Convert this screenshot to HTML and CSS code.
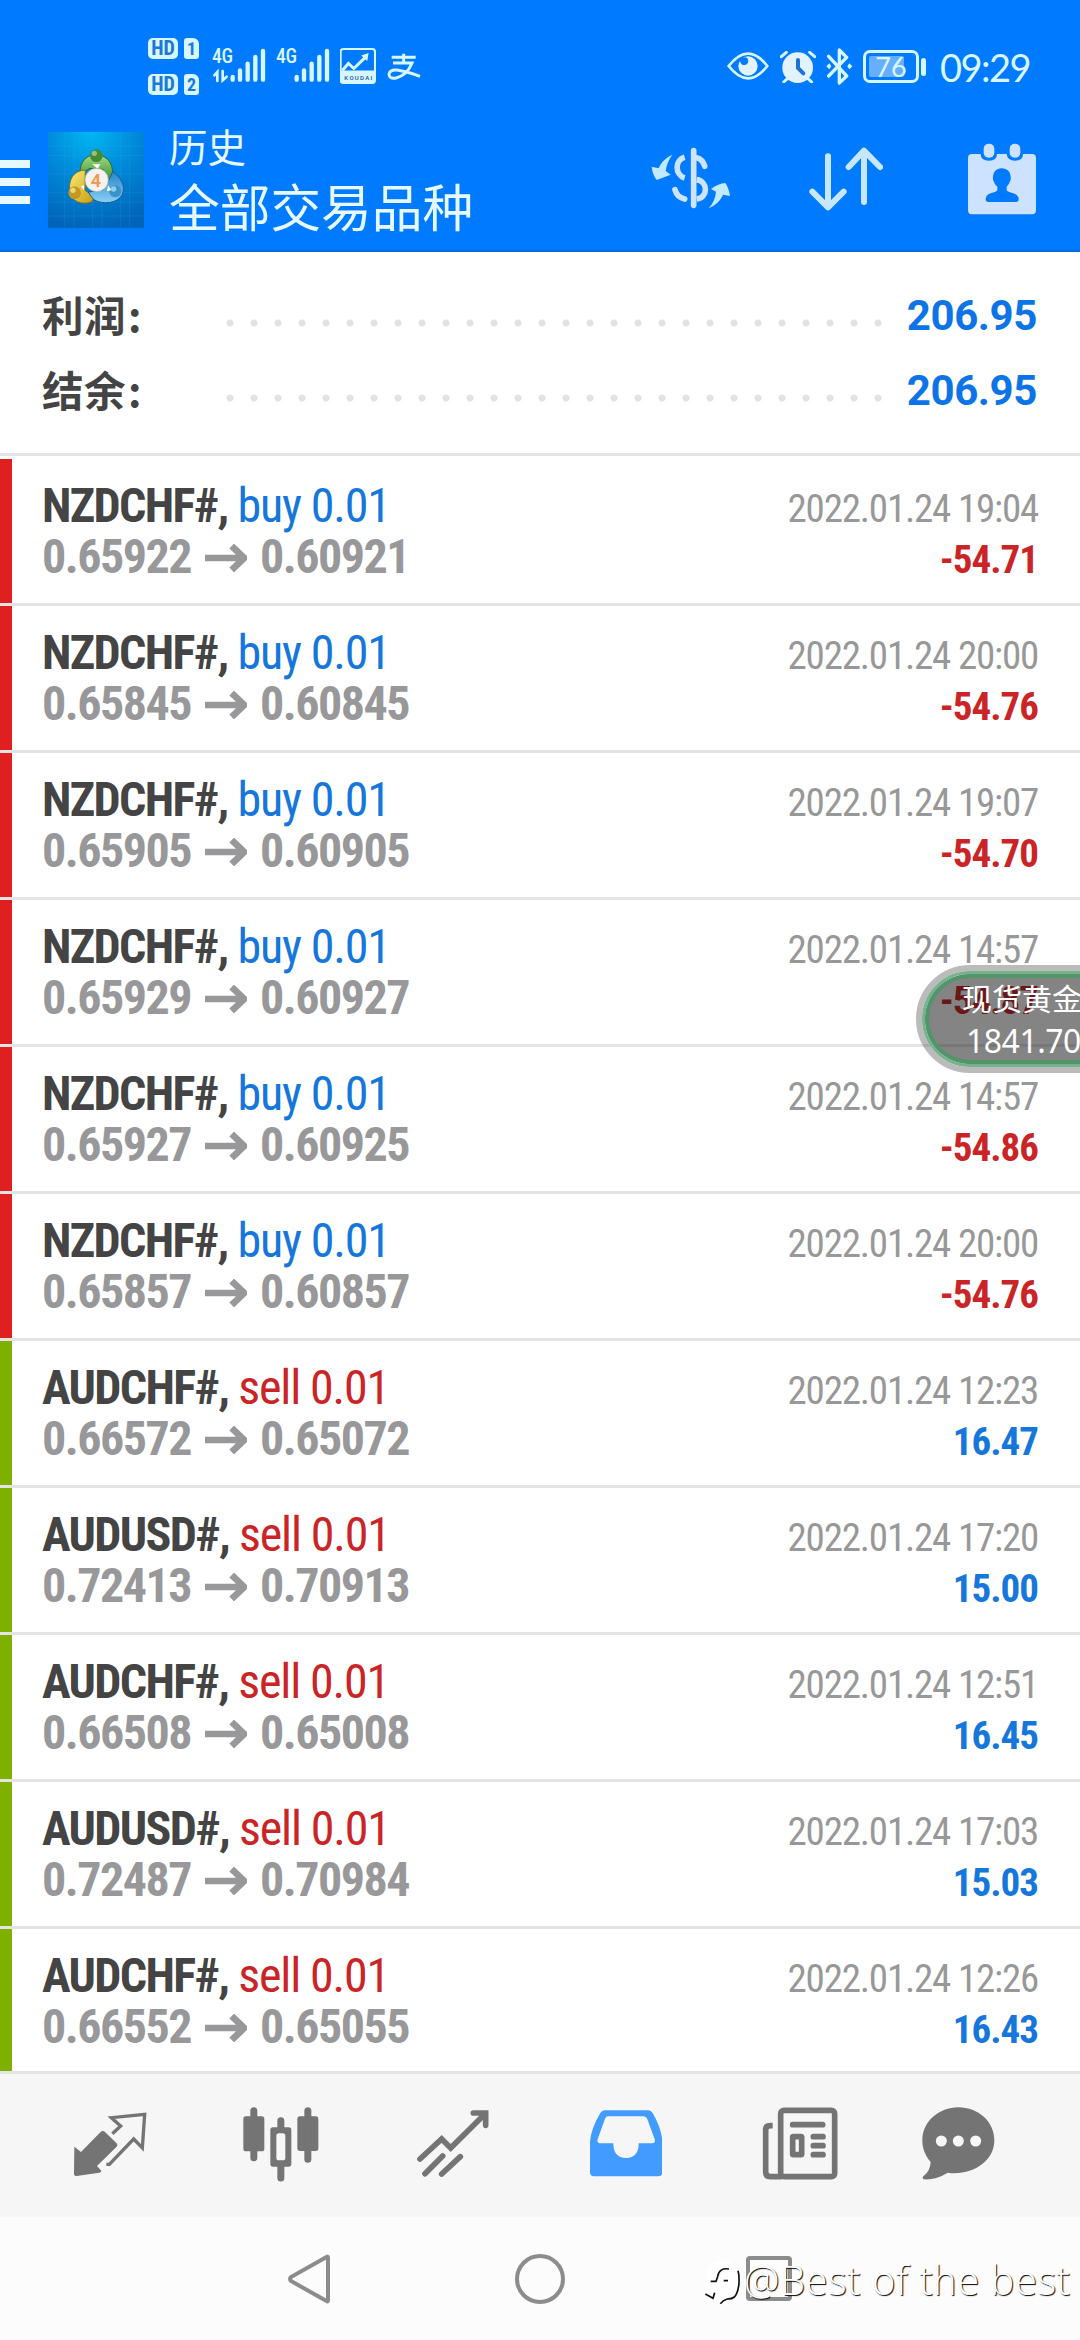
FILE: index.html
```html
<!DOCTYPE html>
<html lang="zh-CN">
<head>
<meta charset="utf-8">
<title>历史</title>
<link rel="stylesheet" href="styles.css">
</head>
<body>
<svg class="defs" width="0" height="0">
  <symbol id="arrow" viewBox="615 296 126 84"><path d="M615 338H732M695 302L733 338L695 374" fill="none" stroke="currentColor" stroke-width="20"/></symbol>
</svg>
<div class="screen">
  <header class="top">
    <div class="status">
      <div class="hd">
        <div class="hd-line"><span class="hd-tag">HD</span><span class="sim">1</span></div>
        <div class="hd-line"><span class="hd-tag">HD</span><span class="sim">2</span></div>
      </div>
      <svg class="sig1" width="54" height="34" viewBox="242 85 162 102" fill="none" stroke="#d6f7ff" stroke-linecap="round"><path d="M304 172V180M326 152V180M349 132V180M372 112V180M395 94V180" stroke-width="13"/><path d="M249 167L258 157V184M274 154V182L286 171" stroke-width="8"/><text x="242" y="131" class="g4">4G</text></svg>
      <svg class="sig2" width="54" height="34" viewBox="437 85 162 102" fill="none" stroke="#d6f7ff" stroke-linecap="round"><path d="M499 172V180M521 152V180M544 132V180M567 112V180M590 94V180" stroke-width="13"/><text x="437" y="131" class="g4">4G</text></svg>
      <svg class="koudai" width="36" height="36" viewBox="629 86 107 107"><rect x="631" y="89" width="102" height="101" rx="8" fill="none" stroke="#d6f7ff" stroke-width="6"/><path d="M630 153H734V184Q734 191 727 191H638Q630 191 630 184Z" fill="#d6f7ff"/><path d="M636 153L654 132L670 147L705 113" fill="none" stroke="#d6f7ff" stroke-width="9"/><path d="M692 108L714 101L710 125Z" fill="#d6f7ff"/><text x="642" y="180" class="kd" textLength="83">KOUDAI</text></svg>
      <svg class="ali" width="34" height="28" viewBox="770 99 102 84" fill="none" stroke="#d6f7ff" stroke-width="9"><path d="M820 101V126M784 112H856M788 129H845Q831 165 797 174Q776 177 776 163Q778 148 800 150Q828 154 869 169"/></svg>
      <div class="status-right">
        <svg width="42" height="28" viewBox="79 97 126 84"><path d="M84 139Q142 65 200 139Q142 213 84 139Z" fill="none" stroke="#d6f7ff" stroke-width="8"/><circle cx="142" cy="139" r="29" fill="#e2f2ff"/><path d="M118 119Q140 105 143 124Q141 139 125 135Q117 131 118 119Z" fill="#007aff"/></svg>
        <svg class="alarm" width="36" height="32" viewBox="239 92 108 96"><circle cx="292" cy="142" r="46" fill="#e2f2ff"/><path d="M243 109L258 96M328 96L343 109M250 185L262 174M322 174L334 185" stroke="#d6f7ff" stroke-width="9" stroke-linecap="round"/><path d="M293 119V143L309 159" fill="none" stroke="#1a72da" stroke-width="12" stroke-linecap="round"/></svg>
        <svg class="bt" width="27" height="37" viewBox="377 84 81 111"><path d="M385 109L439 168L417 189V90L439 112L385 168" fill="none" stroke="#d6f7ff" stroke-width="10" stroke-linejoin="round" stroke-linecap="round"/><path d="M378 139L387 130L393 139L387 148ZM456 139L447 130L441 139L447 148Z" fill="#d6f7ff"/></svg>
        <div class="battery"><span class="level"></span><span class="pct">76</span></div>
        <span class="nub"></span>
        <span class="clock">09:29</span>
      </div>
    </div>
    <div class="appbar">
      <div class="burger"><i></i><i></i><i></i></div>
      <svg class="logo" width="96" height="96" viewBox="0 0 288 288">
        <defs>
          <radialGradient id="sky" cx=".45" cy="0" r="1"><stop offset="0" stop-color="#00b8f2"/><stop offset=".45" stop-color="#008bdb"/><stop offset="1" stop-color="#0065b8"/></radialGradient>
          <linearGradient id="gr" x2="0" y2="1"><stop stop-color="#a6d984"/><stop offset="1" stop-color="#2b8a25"/></linearGradient>
          <linearGradient id="ye" x2="1" y2="1"><stop stop-color="#f8ec72"/><stop offset="1" stop-color="#c99b16"/></linearGradient>
          <linearGradient id="bl" x2="0" y2="1"><stop stop-color="#2584cb"/><stop offset="1" stop-color="#8bd0f4"/></linearGradient>
        </defs>
        <rect width="288" height="288" fill="url(#sky)"/>
        <path d="M50 0V288M78 0V288M134 0V288M162 0V288M218 0V288M245 0V288M0 42H288M0 70H288M0 126H288M0 182H288M0 210H288M0 252H288" stroke="#39b9ee" stroke-opacity=".23" stroke-width="2"/>
        <path d="M97 126C94 88 116 68 145 68C181 70 201 102 191 140Q187 153 178 156L165 112L126 109Z" fill="url(#gr)" stroke="#276d26" stroke-width="3"/>
        <path d="M112 114C78 116 61 139 65 179C69 206 101 222 132 209L139 194L111 175Z" fill="url(#ye)" stroke="#80701d" stroke-width="3"/>
        <path d="M194 119C220 136 233 162 223 187C209 215 165 218 139 204Q126 192 121 180L165 174L180 150Z" fill="url(#bl)" stroke="#176094" stroke-width="3"/>
        <circle cx="145" cy="71" r="19" fill="#438c32"/><circle cx="139" cy="64" r="8" fill="#97bf7d"/>
        <circle cx="80" cy="182" r="19" fill="#c69820"/><circle cx="75" cy="175" r="8" fill="#ecd775"/>
        <circle cx="202" cy="178" r="18" fill="#3b91ca"/><circle cx="197" cy="171" r="8" fill="#91cdec"/>
        <path d="M133 97H157L149 110ZM99 162L109 160L107 175ZM180 160L190 174L177 178Z" fill="#fff"/>
        <circle cx="146" cy="144" r="35" fill="#f4f1ee" stroke="#a2adae" stroke-width="2"/>
        <text x="144" y="164" class="logo4">4</text>
      </svg>
      <div class="titles"><div class="t1">历史</div><div class="t2">全部交易品种</div></div>
      <svg class="ic-money" width="80" height="62" viewBox="91 81 240 186"><g fill="none" stroke="#cce4ff" stroke-width="17"><path d="M219 92V256" stroke-linecap="round"/><path d="M192 112C162 120 162 164 192 174"/><path d="M228 113Q246 117 252 139" stroke-linecap="round"/><path d="M228 179C263 185 263 232 228 237"/><path d="M163 209Q169 231 192 237" stroke-linecap="round"/></g><path d="M155 104C138 112 122 124 114 145L93 140Q96 165 108 180L150 164L135 153Q139 126 155 104ZM264 264C281 258 298 245 307 224L328 228Q324 202 314 189Q293 191 271 207L286 215Q283 245 264 264Z" fill="#bfeaff"/></svg>
      <svg class="ic-sort" width="74" height="64" viewBox="567 82 222 192"><path d="M624 110V262M577 216L624 263L671 216M732 247V94M686 142L732 93L780 142" fill="none" stroke="#c7e7ff" stroke-width="18" stroke-linecap="round" stroke-linejoin="round"/></svg>
      <svg class="ic-cal" width="70" height="72" viewBox="1041 69 210 216"><path d="M1056 102H1082Q1082 122 1107 122Q1131 122 1131 102H1160Q1162 122 1185 122Q1209 122 1209 102H1236Q1248 102 1248 114V270Q1248 283 1236 283H1056Q1044 283 1044 270V114Q1044 102 1056 102Z" fill="#cce2ff"/><rect x="1091" y="71" width="32" height="42" rx="15" fill="#cce2ff"/><rect x="1169" y="71" width="32" height="42" rx="15" fill="#cce2ff"/><path d="M1145 145C1163 145 1174 157 1172 179Q1168 192 1160 200V211Q1162 216 1180 220Q1196 225 1196 238Q1196 246 1188 246H1105Q1097 246 1097 238Q1097 225 1112 220Q1130 216 1132 211V200Q1123 192 1119 179C1117 158 1128 145 1145 145Z" fill="#007aff"/></svg>
    </div>
  </header>
  <section class="summary">
    <div class="sum"><span class="lab">利润<i>:</i></span><span class="dots"></span><span class="amt">206.95</span></div>
    <div class="sum"><span class="lab">结余<i>:</i></span><span class="dots"></span><span class="amt">206.95</span></div>
  </section>
  <main class="list">
    <div class="row loss"><div class="l"><div class="a"><b>NZDCHF#,</b> <span class="buy">buy 0.01</span></div><div class="p">0.65922 <svg class="ar"><use href="#arrow"/></svg> 0.60921</div></div><div class="r"><div class="d">2022.01.24 19:04</div><div class="v neg">-54.71</div></div></div>
    <div class="row loss"><div class="l"><div class="a"><b>NZDCHF#,</b> <span class="buy">buy 0.01</span></div><div class="p">0.65845 <svg class="ar"><use href="#arrow"/></svg> 0.60845</div></div><div class="r"><div class="d">2022.01.24 20:00</div><div class="v neg">-54.76</div></div></div>
    <div class="row loss"><div class="l"><div class="a"><b>NZDCHF#,</b> <span class="buy">buy 0.01</span></div><div class="p">0.65905 <svg class="ar"><use href="#arrow"/></svg> 0.60905</div></div><div class="r"><div class="d">2022.01.24 19:07</div><div class="v neg">-54.70</div></div></div>
    <div class="row loss"><div class="l"><div class="a"><b>NZDCHF#,</b> <span class="buy">buy 0.01</span></div><div class="p">0.65929 <svg class="ar"><use href="#arrow"/></svg> 0.60927</div></div><div class="r"><div class="d">2022.01.24 14:57</div><div class="v neg">-54.87</div></div></div>
    <div class="row loss"><div class="l"><div class="a"><b>NZDCHF#,</b> <span class="buy">buy 0.01</span></div><div class="p">0.65927 <svg class="ar"><use href="#arrow"/></svg> 0.60925</div></div><div class="r"><div class="d">2022.01.24 14:57</div><div class="v neg">-54.86</div></div></div>
    <div class="row loss"><div class="l"><div class="a"><b>NZDCHF#,</b> <span class="buy">buy 0.01</span></div><div class="p">0.65857 <svg class="ar"><use href="#arrow"/></svg> 0.60857</div></div><div class="r"><div class="d">2022.01.24 20:00</div><div class="v neg">-54.76</div></div></div>
    <div class="row gain"><div class="l"><div class="a"><b>AUDCHF#,</b> <span class="sell">sell 0.01</span></div><div class="p">0.66572 <svg class="ar"><use href="#arrow"/></svg> 0.65072</div></div><div class="r"><div class="d">2022.01.24 12:23</div><div class="v pos">16.47</div></div></div>
    <div class="row gain"><div class="l"><div class="a"><b>AUDUSD#,</b> <span class="sell">sell 0.01</span></div><div class="p">0.72413 <svg class="ar"><use href="#arrow"/></svg> 0.70913</div></div><div class="r"><div class="d">2022.01.24 17:20</div><div class="v pos">15.00</div></div></div>
    <div class="row gain"><div class="l"><div class="a"><b>AUDCHF#,</b> <span class="sell">sell 0.01</span></div><div class="p">0.66508 <svg class="ar"><use href="#arrow"/></svg> 0.65008</div></div><div class="r"><div class="d">2022.01.24 12:51</div><div class="v pos">16.45</div></div></div>
    <div class="row gain"><div class="l"><div class="a"><b>AUDUSD#,</b> <span class="sell">sell 0.01</span></div><div class="p">0.72487 <svg class="ar"><use href="#arrow"/></svg> 0.70984</div></div><div class="r"><div class="d">2022.01.24 17:03</div><div class="v pos">15.03</div></div></div>
    <div class="row gain"><div class="l"><div class="a"><b>AUDCHF#,</b> <span class="sell">sell 0.01</span></div><div class="p">0.66552 <svg class="ar"><use href="#arrow"/></svg> 0.65055</div></div><div class="r"><div class="d">2022.01.24 12:26</div><div class="v pos">16.43</div></div></div>
  </main>
  <nav class="tabs">
    <svg class="tb1" width="74" height="66" viewBox="99 156 222 198"><path d="M103 260L123 276L181 217Q188 210 195 216L229 249Q235 255 229 261L171 318L184 332Q184 337 178 338L110 348Q102 348 102 341Z" fill="#747474"/><path d="M217 221L242 198L214 173L314 163L307 264L281 237L208 313H199" fill="none" stroke="#747474" stroke-width="10"/></svg>
    <svg class="tb2" width="76" height="75" viewBox="611 140 228 225"><g fill="#747474"><rect x="612" y="168" width="63" height="105" rx="8"/><rect x="774" y="168" width="63" height="104" rx="8"/><path d="M633 151a10.500 10.500 0 0 1 21 0V292a10.500 10.500 0 0 1-21 0ZM795 151a10.500 10.500 0 0 1 21 0V297a10.500 10.500 0 0 1-21 0ZM714 181a10.500 10.500 0 0 1 21 0V353a10.500 10.500 0 0 1-21 0Z"/><rect x="693" y="201" width="63" height="118" rx="8"/></g><rect x="711" y="219" width="27" height="81" rx="8" fill="#f7f7f7"/></svg>
    <svg class="tb3" width="72" height="67" viewBox="1133 149 216 201" fill="none" stroke="#747474" stroke-width="17" stroke-linecap="round"><path d="M1142 296L1207 236L1234 263L1333 165M1302 158H1339V195" /><path d="M1157 340L1210 287M1207 341L1263 289"/></svg>
    <svg class="tb4" width="72" height="67" viewBox="91 149 216 201"><path fill-rule="evenodd" d="M135 150H266Q274 150 279 158Q306 205 308 244V336Q308 348 296 348H103Q91 348 91 336V244Q94 205 122 158Q127 150 135 150ZM146 168Q139 168 136 175L115 234Q109 249 125 249H161Q161 293 199 293Q237 293 237 249H275Q290 249 284 234L263 177Q260 168 250 168Z" fill="#429cff"/></svg>
    <svg class="tb5" width="76" height="73" viewBox="606 139 228 219"><g fill="none" stroke="#747474" stroke-width="17"><rect x="662" y="149" width="162" height="199" rx="10"/><path d="M638 195H630Q617 195 617 208V334Q617 348 631 348H665"/><path d="M698 192H788M760 228H789M760 255H789M760 282H789" stroke-linecap="round"/><rect x="698" y="228" width="27" height="54" rx="2"/></g></svg>
    <svg class="tb6" width="73" height="73" viewBox="1085 140 219 219"><path d="M1194 141C1254 141 1302 184 1302 240C1302 306 1232 347 1162 337Q1127 359 1091 357Q1084 354 1089 348Q1110 332 1111 305C1094 285 1086 265 1086 240C1086 184 1136 141 1194 141Z" fill="#747474"/><g fill="#f7f7f7"><circle cx="1143" cy="242" r="16.500"/><circle cx="1194" cy="242" r="16.500"/><circle cx="1246" cy="242" r="16.500"/></g></svg>
  </nav>
  <footer class="nav">
    <svg width="45" height="50" viewBox="0 0 45 50"><path d="M41 3.500V46.500Q41 48 39.500 47L4 27Q2 25 4 23L39.500 3Q41 2 41 3.500Z" fill="none" stroke="#8c8c8c" stroke-width="4"/></svg>
    <span class="home"></span>
    <span class="recent"></span>
  </footer>
  <div class="pill"><div class="pill-in"><div class="g1">现货黄金</div><div class="g2">1841.70</div></div></div>
  <div class="mark"><svg width="36" height="50" viewBox="15 48 108 150"><path d="M67 60C95 60 114 85 114 120Q114 160 98 172L75 176L60 188L56 178C28 172 16 150 17 115Q22 65 67 60Z" fill="#fff"/><path d="M87 87Q57 82 53 110L48 124H32M71 122H84M16 162L39 175L44 158M114 92Q118 104 117 130Q114 160 103 171Q96 177 82 177Q70 180 61 191" fill="none" stroke="#111" stroke-width="5"/></svg><span>@Best of the best</span></div>
</div>
</body>
</html>
```

FILE: styles.css
```css
* { box-sizing: border-box; }
body { margin: 0; font-family: Roboto, "Noto Sans CJK SC", sans-serif; background: #fff; }
.defs { position: absolute; }
.screen { position: relative; width: 1080px; height: 2340px; overflow: hidden; display: flex; flex-direction: column; }
svg { display: block; flex: none; }

.top { height: 252px; background: #007aff; border-bottom: 2px solid #0a6ad6; flex: none; }
.status { height: 110px; display: flex; align-items: flex-start; padding: 0 51px 0 148px; color: #d6f7ff; }
.hd { padding-top: 38px; width: 64px; display: flex; flex-direction: column; gap: 15px; }
.hd-line { display: flex; gap: 6px; height: 21px; }
.hd-tag { width: 30px; border-radius: 5px; background: #d6f7ff; color: #1a78d8; font: bold 20px/21px Roboto, sans-serif; font-stretch: 80%; text-align: center; }
.sim { width: 15px; border-radius: 3px 6px 3px 3px; background: #d6f7ff; color: #1a78d8; font: bold 18px/21px Roboto, sans-serif; font-stretch: 75%; text-align: center; }
.g4 { font: 500 59px Roboto, sans-serif; font-stretch: 75%; letter-spacing: -1px; fill: #d6f7ff; stroke: none; }
.kd { font: 500 18px Roboto, sans-serif; fill: #16539c; }
.sig1, .sig2 { overflow: visible; }
.sig1 { margin-top: 48px; }
.sig2 { margin: 48px 0 0 10px; }
.koudai { margin: 48px 0 0 10px; }
.ali { margin: 53px 0 0 11px; }
.status-right { margin-left: auto; display: flex; align-items: flex-start; padding-top: 52px; }
.alarm { margin: -1px 0 0 11px; }
.bt { margin: -4px 0 0 10px; }
.battery { margin: -2px 0 0 10px; width: 56px; height: 33px; border: 3px solid #d6f7ff; border-radius: 7px; padding: 3px; display: grid; }
.battery > * { grid-area: 1 / 1; }
.level { width: 35px; background: #66afff; border-radius: 2px; }
.pct { font: 27px/21px Lato, sans-serif; text-align: center; }
.nub { width: 5px; height: 18px; background: #d6f7ff; border-radius: 3px; margin: 6px 0 0 2px; }
.clock { width: 89px; margin-left: 14px; font: 38px/30px Lato, sans-serif; letter-spacing: -1.500px; white-space: nowrap; }

.appbar { height: 140px; display: flex; align-items: flex-start; }
.burger { width: 30px; padding-top: 50px; display: flex; flex-direction: column; gap: 10px; }
.burger i { height: 8px; background: #e6f9ff; }
.logo { margin: 22px 0 0 18px; }
.logo4 { font: bold 54px Roboto, sans-serif; fill: #ee9c55; text-anchor: middle; }
.titles { margin-left: 25px; width: 482px; padding-top: 15px; color: #e6f9ff; white-space: nowrap; }
.t1 { font-size: 38.500px; line-height: 48px; }
.t2 { font-size: 50.700px; line-height: 74px; }
.ic-money { margin-top: 37px; }
.ic-sort { margin: 37px 0 0 78px; }
.ic-cal { margin: 33px 0 0 84px; }

.summary { height: 204px; border-bottom: 3px solid #e4e4e4; padding: 26px 43px 0 42px; flex: none; }
.sum { height: 75px; display: flex; line-height: 75px; align-items: flex-start; }
.lab { width: 184px; color: #444; font: 700 41.500px/73px "Noto Sans CJK SC", sans-serif; letter-spacing: .5px; }
.lab i { font-style: normal; padding-left: 2px; }
.dots { width: 658px; height: 75px; background: radial-gradient(circle at 4px 45px, #e2e2e2 3.200px, transparent 3.900px) 0 0 / 24px 75px repeat-x; }
.amt { flex: 1; text-align: right; color: #0d74e7; font-weight: 700; font-size: 42px; letter-spacing: -.4px; }

.list { margin-top: 3px; height: 1612px; overflow: hidden; flex: none; }
.row { height: 147px; border-bottom: 3px solid #e4e4e4; display: flex; justify-content: space-between; padding-right: 42px; white-space: nowrap; font-stretch: 75%; }
.row::before { content: ""; width: 12px; }
.loss::before { background: #e02020; }
.gain::before { background: #7fb000; }
.l { flex: 1; padding: 21px 0 0 30px; font-size: 48px; line-height: 51px; }
.a { height: 51px; color: #444; letter-spacing: -1.150px; }
.a b { letter-spacing: -1.650px; }
.p { color: #98989a; font-weight: 700; display: flex; letter-spacing: -1.500px; }
.ar { width: 42px; height: 28px; margin: 13px 13px 0 14px; }
.r { padding-top: 25px; font-size: 39px; line-height: 51px; text-align: right; }
.d { color: #989898; letter-spacing: -1.200px; }
.v { font-weight: 700; letter-spacing: -1px; }
.buy { color: #1576dc; }
.sell { color: #cb2427; }
.neg { color: #cb2427; }
.pos { color: #1576dc; }

.tabs { height: 146px; flex: none; background: #f6f6f6; border-top: 3px solid #e4e4e4; display: flex; align-items: flex-start; padding: 33px 0 0 73px; }
.tb1 { margin-top: 5px; }
.tb2 { margin-left: 96px; }
.tb3 { margin: 3px 0 0 98px; }
.tb4 { margin: 3px 0 0 101px; }
.tb5 { margin-left: 100px; }
.tb6 { margin-left: 84px; }
.nav { flex: 1; background: #fcfcfc; display: flex; align-items: flex-start; padding: 37px 0 0 287px; }
.home { width: 50px; height: 50px; border: 4px solid #8c8c8c; border-radius: 50%; margin-left: 183px; }
.recent { width: 46px; height: 45px; border: 4px solid #8c8c8c; border-radius: 4px; margin: 2px 0 0 181px; }

.pill { position: absolute; left: 916px; top: 965px; width: 240px; height: 108px; border-radius: 54px; border: 6px solid rgba(60,60,60,.35); }
.pill-in { height: 96px; border-radius: 48px; border: 3px solid #77b18e; box-shadow: inset 0 0 0 4px #51956b; background: rgba(10,10,10,.5); background-clip: padding-box; color: #fff; padding: 4px 0 0 37px; }
.g1 { font: 30px/38px "Noto Sans CJK SC", sans-serif; }
.g2 { font: 32px/38px "Noto Sans", sans-serif; padding: 6px 0 0 4px; letter-spacing: -.5px; }
.mark { position: absolute; left: 705px; top: 2256px; display: flex; color: #fff; }
.mark span { font: 300 40px/48px "Open Sans", sans-serif; text-shadow: 1px 1px 1px #000; white-space: nowrap; margin-left: 3px; letter-spacing: .5px; }
```
